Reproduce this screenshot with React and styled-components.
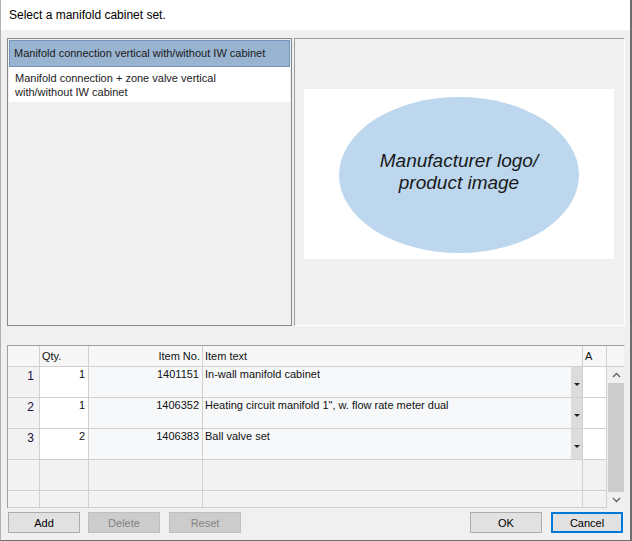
import React from 'react';
import styled, { createGlobalStyle } from 'styled-components';

const Global = createGlobalStyle`
  html, body { margin: 0; padding: 0; background: #ffffff; }
  * { box-sizing: border-box; }
`;

const FONT = `"Liberation Sans", Arial, sans-serif`;

const Window = styled.div`
  width: 632px;
  height: 541px;
  display: flex;
  flex-direction: column;
  background: #f0f0f0;
  border-right: 2px solid #6e6e6e;
  border-bottom: 1px solid #6e6e6e;
  border-left: 1px solid #b0b0b0;
  font-family: ${FONT};
  font-size: 11px;
  color: #000;
`;

const TitleBar = styled.div`
  height: 30px;
  background: #fff;
  padding: 0 0 0 8px;
  display: flex;
  align-items: center;
  font-size: 12px;
`;

const Body = styled.div`
  flex: 1;
  display: flex;
  flex-direction: column;
  padding: 8px 5px 0 6px;
`;

const Panels = styled.div`
  display: flex;
  gap: 2px;
  height: 288px;
`;

const ListBox = styled.div`
  width: 285px;
  border: 1px solid #828790;
  background: #f0f0f0;
  padding: 1px;
  display: flex;
  flex-direction: column;
`;

const ListItem = styled.div`
  padding: ${p => (p.$selected ? '5px 4px 6px' : '3px 5px 2px')};
  line-height: 14px;
  background: ${p => (p.$selected ? '#99b4d1' : '#fff')};
  border: 1px solid ${p => (p.$selected ? '#6f95bd' : '#fff')};
  color: ${p => (p.$selected ? '#1a1a1a' : '#222')};
`;

const Preview = styled.div`
  flex: 1;
  border-top: 1px solid #a0a0a0;
  border-left: 1px solid #a0a0a0;
  border-right: 1px solid #fff;
  border-bottom: 1px solid #fff;
  background: #f0f0f0;
  display: flex;
  align-items: flex-start;
  justify-content: center;
  padding: 50px 10px 0 9px;
`;

const ImageBox = styled.div`
  width: 310px;
  height: 170px;
  background: #fff;
  display: flex;
  align-items: center;
  justify-content: center;
`;

const Ellipse = styled.div`
  width: 240px;
  height: 156px;
  margin-top: 1px;
  padding-bottom: 6px;
  border-radius: 50%;
  background: #bdd7ee;
  display: flex;
  align-items: center;
  justify-content: center;
  text-align: center;
  font-style: italic;
  font-size: 19px;
  line-height: 22px;
  color: #1a1a1a;
`;

const Grid = styled.div`
  margin-top: 19px;
  height: 163px;
  display: grid;
  grid-template-columns: 32px 49px 114px 380px 24px 18px;
  grid-template-rows: 21px 31px 31px 31px 31px 17px;
  border-top: 1px solid #a0a0a0;
  border-left: 1px solid #a0a0a0;
  border-right: 1px solid #f0f0f0;
  background: #f2f2f2;
  overflow: hidden;
  width: 618px;
`;

const Cell = styled.div`
  border-right: 1px solid #d0d0d0;
  border-bottom: 1px solid #d0d0d0;
  background: ${p => p.$bg || '#f2f2f2'};
  padding: ${p => (p.$head ? '4px 2px 0' : '1px 3px 0')};
  text-align: ${p => p.$align || 'left'};
  white-space: nowrap;
  overflow: hidden;
  color: ${p => p.$color || '#111'};
`;

const RowHead = styled(Cell)`
  font-size: 12px;
  padding: 2px 5px 0;
  text-align: right;
  color: #1c1040;
`;

const TextCell = styled(Cell)`
  display: flex;
  padding: 0;
`;

const TextBody = styled.div`
  flex: 1;
  padding: 1px 2px 0;
`;

const DropBtn = styled.div`
  width: 11px;
  background: #dcdcdc;
  display: flex;
  align-items: center;
  justify-content: center;
  padding-top: 5px;
  &::after {
    content: '';
    border-left: 3px solid transparent;
    border-right: 3px solid transparent;
    border-top: 3px solid #222;
  }
`;

const ScrollBar = styled.div`
  grid-column: 6;
  grid-row: 2 / span 5;
  background: #f0f0f0;
  display: flex;
  flex-direction: column;
  align-items: center;
`;

const ScrollArrow = styled.div`
  height: 16px;
  width: 100%;
  display: flex;
  align-items: center;
  justify-content: center;
`;

const Thumb = styled.div`
  flex: 1;
  width: 17px;
  margin-left: 1px;
  background: #cdcdcd;
`;

const Footer = styled.div`
  display: flex;
  align-items: center;
  padding: 4px 0 0 1px;
  height: 25px;
`;

const Button = styled.button`
  width: 72px;
  height: 21px;
  margin-right: ${p => p.$mr || 0}px;
  margin-left: ${p => p.$ml || 0}px;
  font-family: ${FONT};
  font-size: 11px;
  padding: 0;
  background: ${p => (p.disabled ? '#cccccc' : '#e1e1e1')};
  border: ${p => (p.$focus ? '2px solid #0078d7' : p.disabled ? '1px solid #bfbfbf' : '1px solid #adadad')};
  color: ${p => (p.disabled ? '#838383' : '#000')};
`;

const Chevron = ({ up }) => (
  <svg width="9" height="6" viewBox="0 0 9 6">
    <path d={up ? 'M1 5 L4.5 1.5 L8 5' : 'M1 1 L4.5 4.5 L8 1'} fill="none" stroke="#606060" strokeWidth="1.3" />
  </svg>
);

const rows = [
  { n: 1, qty: 1, no: '1401151', text: 'In-wall manifold cabinet' },
  { n: 2, qty: 1, no: '1406352', text: 'Heating circuit manifold 1", w. flow rate meter dual' },
  { n: 3, qty: 2, no: '1406383', text: 'Ball valve set' },
];

export default function App() {
  return (
    <>
      <Global />
      <Window>
        <TitleBar>Select a manifold cabinet set.</TitleBar>
        <Body>
          <Panels>
            <ListBox>
              <ListItem $selected>Manifold connection vertical with/without IW cabinet</ListItem>
              <ListItem>Manifold connection + zone valve vertical<br />with/without IW cabinet</ListItem>
            </ListBox>
            <Preview>
              <ImageBox>
                <Ellipse>Manufacturer logo/<br />product image</Ellipse>
              </ImageBox>
            </Preview>
          </Panels>

          <Grid>
            <Cell $bg="#f7f7f7" />
            <Cell $bg="#f7f7f7" $head>Qty.</Cell>
            <Cell $bg="#f7f7f7" $head $align="right">Item No.</Cell>
            <Cell $bg="#f7f7f7" $head>Item text</Cell>
            <Cell $bg="#f7f7f7" $head>A</Cell>
            <Cell $bg="#f7f7f7" />
            {rows.map(r => (
              <React.Fragment key={r.n}>
                <RowHead>{r.n}</RowHead>
                <Cell $bg="#fff" $align="right">{r.qty}</Cell>
                <Cell $bg="#f7f8fa" $align="right">{r.no}</Cell>
                <TextCell $bg="#f7f8fa">
                  <TextBody>{r.text}</TextBody>
                  <DropBtn />
                </TextCell>
                <Cell $bg="#fff" />
              </React.Fragment>
            ))}
            <Cell /><Cell /><Cell /><Cell /><Cell />
            <Cell /><Cell /><Cell /><Cell /><Cell />
            <ScrollBar>
              <ScrollArrow><Chevron up /></ScrollArrow>
              <Thumb />
              <ScrollArrow><Chevron /></ScrollArrow>
            </ScrollBar>
          </Grid>

          <Footer>
            <Button $mr={8}>Add</Button>
            <Button disabled $mr={9}>Delete</Button>
            <Button disabled>Reset</Button>
            <Button $ml={229} $mr={9}>OK</Button>
            <Button $focus>Cancel</Button>
          </Footer>
        </Body>
      </Window>
    </>
  );
}
